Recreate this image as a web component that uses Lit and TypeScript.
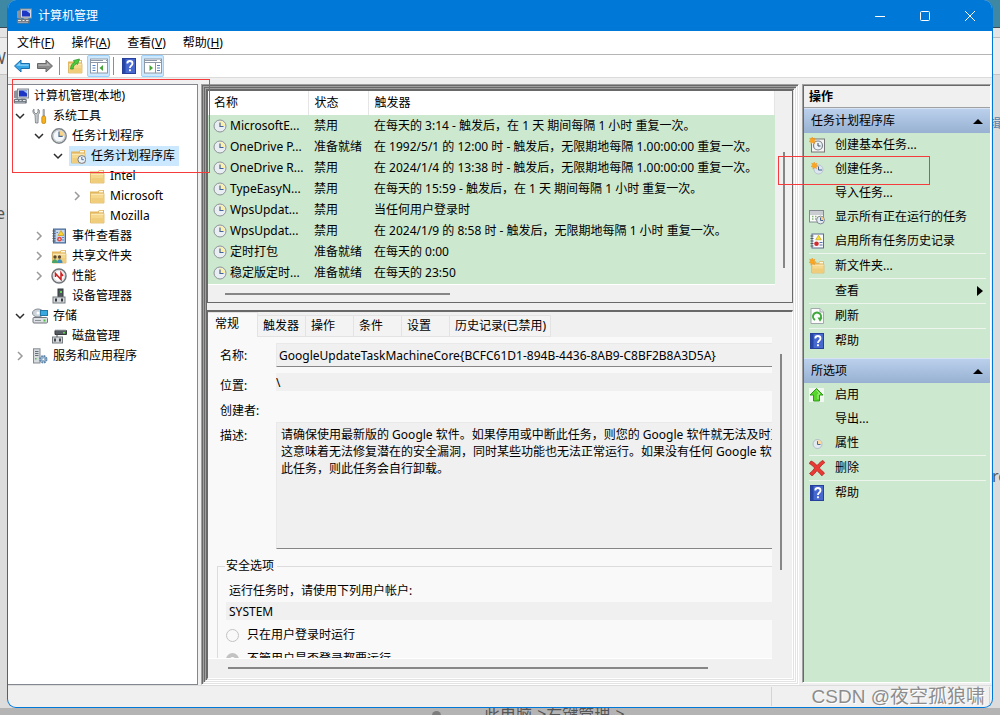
import { LitElement, html, svg, css, nothing } from "lit";
import { customElement, state } from "lit/decorators.js";
import { classMap } from "lit/directives/class-map.js";
import { styleMap } from "lit/directives/style-map.js";

const folderShape = svg`
  <path d="M1 3.500h8l1-1.500h5v12.500H1z" fill="#e3b75d"/>
  <rect x="10" y="2.800" width="4" height="1.600" fill="#fffbe8"/>
  <path d="M1.500 5.500h13.500v9.500h-13.500z" fill="#f6d88d" stroke="#dcb566" stroke-width=".8"/>
  <path d="M2.500 10h12v4.500h-12z" fill="#f0cd7a"/>
  <path d="M2 6.200h12.500" stroke="#fdeec2"/>`;

const star = svg`<path d="M4 0l1 2.500L7.500 1.500 6.500 4 9 5.200 6.300 6 7 8.500 4.500 7 2.500 9 2.300 6.200 0 5.500 2 4 .8 1.500 3.200 2.300z" fill="#ffa51c" stroke="#e98a10" stroke-width=".5"/>`;

const helpShape = svg`
  <rect x="1.500" y=".5" width="13" height="15" fill="#4668cf" stroke="#27419a"/>
  <rect x="2" y="1" width="2.500" height="14" fill="#2447a8"/>
  <path d="M6.300 5.400c0-3.200 5.200-3.200 5.200 0 0 2.200-2.600 2.200-2.600 4.600" fill="none" stroke="#fff" stroke-width="1.800"/>
  <rect x="8" y="11.300" width="1.900" height="1.900" fill="#fff"/>`;

const paneShape = svg`
  <rect x=".5" y="2" width="17" height="14" fill="#fff" stroke="#8d99a6"/>
  <path d="M1 3.500h16M1 5.500h16" stroke="#8d99a6"/>
  <path d="M13 3.500h3" stroke="#fff"/>`;

const ICONS: Record<string, unknown> = {
  computer: svg`
    <path d="M1 3l4-1v9l-4-1z" fill="#8b939c"/>
    <rect x="4.500" y="1" width="11" height="9" fill="#d6dade" stroke="#858c94"/>
    <rect x="6" y="2.500" width="8" height="6" fill="#1e36c4"/>
    <path d="M10 2.500h4v3z" fill="#9fc3f5"/>
    <path d="M8 10h4l1 2H7z" fill="#9da5ad"/>
    <rect x=".8" y="11" width="13" height="4.500" rx="1" fill="#6d757d"/>
    <path d="M2 12.500h3M6.500 12.500h2M10 12.500h2.500" stroke="#e4e8ec"/>
    <path d="M2 14.300h10" stroke="#a8b0b8"/>`,
  tools: svg`
    <path d="M2 1v3l2 2 2-2V1c2 1 2 4 .3 5.600L6 15H3.500L3 6.800C.5 5.200.3 2 2 1z" fill="#c5c9cd" stroke="#777d83" stroke-width=".8"/>
    <path d="M11 1.500h1.400V8H11z" fill="#b9bec3" stroke="#83888d" stroke-width=".6"/>
    <rect x="9.800" y="8" width="3.800" height="7.500" rx="1.500" fill="#f6b21b" stroke="#b87a0c" stroke-width=".7"/>`,
  clock: svg`
    <circle cx="8" cy="8" r="7.200" fill="#e6ebf0" stroke="#7d8287" stroke-width="1.400"/>
    <circle cx="8" cy="8" r="5.700" fill="#f5f8fa" stroke="#b8bdc2" stroke-width=".7"/>
    <path d="M8 8V2.500A5.500 5.500 0 0 1 13.500 8z" fill="#f7d58b"/>
    <path d="M8 3.500V8.300h3.700" fill="none" stroke="#4b6a93" stroke-width="1.200"/>`,
  task: svg`
    <circle cx="8" cy="8" r="6" fill="#e9eef2" stroke="#8d9297"/>
    <path d="M8 8V3A5 5 0 0 1 13 8z" fill="#fbf0a5"/>
    <path d="M8 4.500V8.500h3.500" fill="none" stroke="#47639b" stroke-width="1.200"/>`,
  folder: folderShape,
  taskFolder: svg`${folderShape}
    <circle cx="11.800" cy="11.500" r="3.900" fill="#edf2f6" stroke="#777d84"/>
    <path d="M11.800 9v2.700h2" fill="none" stroke="#456da5"/>`,
  events: svg`
    <rect x="2.500" y="1" width="12" height="14" fill="#7b9cc8" stroke="#4a6894"/>
    <rect x="4.500" y="2" width="9" height="12" fill="#c9d8ec"/>
    <path d="M1.500 3h3M1.500 5.500h3M1.500 8h3M1.500 10.500h3M1.500 13h3" stroke="#555c66"/>
    <path d="M10 2.500l3 5H7z" fill="#ffd42a" stroke="#b8900d" stroke-width=".6"/>
    <path d="M5.500 4.500h1.500M11 9.500h2M11 12h2" stroke="#5d85be"/>
    <circle cx="8.500" cy="11.200" r="2.400" fill="#e04a45"/><circle cx="8.500" cy="11.200" r=".9" fill="#fbd5d3"/>`,
  shared: svg`${folderShape}
    <circle cx="4" cy="9" r="1.700" fill="#5b4a32"/><circle cx="8.500" cy="9" r="1.700" fill="#5b4a32"/>
    <path d="M1 15c0-5 5.500-5 5.500 0z" fill="#48a568"/><path d="M6 15c0-5 5.500-5 5.500 0z" fill="#3b8ec2"/>`,
  perf: svg`
    <circle cx="8" cy="8" r="7" fill="#fff" stroke="#70757a" stroke-width="1.500"/>
    <circle cx="8" cy="8" r="5.500" fill="#fff" stroke="#c2c6ca" stroke-width=".7"/>
    <path d="M4.500 9V5.500l5.500 6V5l2 3" fill="none" stroke="#cc1f1f" stroke-width="1.500"/>`,
  device: svg`
    <rect x="7" y="1" width="5" height="8" fill="#50565c" stroke="#33383c"/>
    <rect x="9" y="3" width="2" height="2" fill="#5fd153"/>
    <rect x="2" y="9" width="12" height="6" fill="#d4d8dc" stroke="#767c82"/>
    <path d="M5 10.500v3M11 10.500v3" stroke="#35393d" stroke-width="2"/>`,
  storage: svg`
    <ellipse cx="6" cy="5" rx="5.500" ry="4" fill="#ccd3da" stroke="#868d94"/>
    <circle cx="6" cy="5" r="1.500" fill="#fff"/>
    <rect x="8.500" y="2.500" width="7" height="5" fill="#38a8e0" stroke="#2378a8"/>
    <rect x="1" y="9.500" width="14.500" height="5.500" rx="1" fill="#dce0e4" stroke="#70767c"/>
    <path d="M3 12.500h6" stroke="#8c9298"/><rect x="11.500" y="11.500" width="2" height="2" fill="#48c03c"/>`,
  disk: svg`
    <path d="M4 2.500h11.500v4H4z" fill="#555b61" stroke="#35393d"/>
    <path d="M4 2h11" stroke="#b9bfc5"/><rect x="12" y="4" width="2" height="1.500" fill="#5fd153"/>
    <rect x="1.500" y="9" width="10" height="6" fill="#d4d8dc" stroke="#767c82"/>
    <path d="M6 6.500v2.500" stroke="#555"/><path d="M4 10.500v3M9 10.500v3" stroke="#35393d" stroke-width="1.800"/>`,
  services: svg`
    <rect x="1.500" y=".8" width="6.500" height="14.200" fill="#d5dade" stroke="#858b91"/>
    <path d="M3 3.500h3.500M3 5.500h3.500M3 7.500h3.500" stroke="#6b7178"/><rect x="3" y="10" width="1.500" height="1.500" fill="#54bf46"/>
    <circle cx="11.300" cy="11.300" r="3.200" fill="#a9c3dc" stroke="#5f86ab" stroke-width="2" stroke-dasharray="1.700 .8"/>
    <circle cx="11.300" cy="11.300" r="1.300" fill="#fff" stroke="#5f86ab" stroke-width=".6"/>`,
  back: svg`<path d="M.5 8L7 2v3.500h8.500v5H7V14z" fill="#36a5e6" stroke="#1c6dac"/><path d="M2.500 7.700L6 4.400v2.100h8.500v1.300" fill="#8fd2f8"/>`,
  forward: svg`<path d="M15.500 8L9 2v3.500H.5v5H9V14z" fill="#8b8b8b" stroke="#686868"/><path d="M13.500 7.700L10 4.400v2.100H1.500v1.300" fill="#b9b9b9"/>`,
  up: svg`${folderShape}<path d="M3.500 11c.3-4 2-6 4-6.500L6.500 2.500 12.500 1 10.500 6.500 9.300 5.800C7 7 6 8.500 6.300 11z" fill="#4ccc3c" stroke="#249021" stroke-width=".7"/>`,
  help: helpShape,
  wizard: svg`
    <rect x="2.500" y="2" width="13" height="13" fill="#f4f4f2" stroke="#777"/>
    <circle cx="9" cy="8.500" r="4.500" fill="#edf2f7" stroke="#7d858c" stroke-width="1.200"/>
    <path d="M9 6v3h2.500" fill="none" stroke="#3f4d63"/>
    <g transform="scale(.8)">${star}</g>`,
  newTask: svg`
    <circle cx="9.500" cy="8.500" r="4.500" fill="#dce6f0" stroke="#b9c3cd"/>
    <path d="M9.500 5.500V9H13" fill="none" stroke="#44608c"/>
    <g transform="translate(2 1) scale(.8)">${star}</g>`,
  running: svg`
    <rect x=".5" y="1.500" width="14" height="11.500" fill="#fbfbfb" stroke="#848a90"/>
    <path d="M1 3h13M1 5h13" stroke="#98a0a8"/><path d="M3 7.500h1.500M6 7.500h1.500M3 10h1.500M6 10h1.500" stroke="#84b374" stroke-width="1.300"/>
    <circle cx="11.500" cy="11" r="3.900" fill="#e5ecf2" stroke="#7f878f"/>
    <path d="M11.500 11V7.500a3.500 3.500 0 0 1 3.500 3.500z" fill="#f7c985"/><path d="M11.500 8.500v3H14" fill="none" stroke="#47658f"/>`,
  history: svg`
    <rect x="3" y="1" width="11.500" height="14" fill="#f7f9fc" stroke="#5c6d8c"/>
    <path d="M1.500 3h3M1.500 5.500h3M1.500 8h3M1.500 10.500h3M1.500 13h3" stroke="#555c66"/>
    <path d="M9.500 2.300l2.800 4.500H6.700z" fill="#ffe02e" stroke="#b39a10" stroke-width=".6"/>
    <path d="M10.500 9.500h3M10.500 12h3" stroke="#5475ad"/>
    <circle cx="7.500" cy="10.700" r="2.300" fill="#d12c2c"/>`,
  newFolder: svg`<g transform="translate(1.500 1.500) scale(.9)">${folderShape}</g><g transform="scale(.8)">${star}</g>`,
  refresh: svg`
    <path d="M2 .5h9l3.500 3.500v11.500H2z" fill="#fcfcfc" stroke="#a3a8ad"/><path d="M11 .5V4h3.500" fill="#e4e6e8" stroke="#a3a8ad"/>
    <path d="M6 12A4 4 0 1 1 11.500 10.500" fill="none" stroke="#3ea83a" stroke-width="2"/>
    <path d="M8.500 9.500l5 .2-2.500 4z" fill="#3ea83a"/>`,
  enable: svg`<rect x="0" y="1" width="15" height="14" fill="#f2f6f0"/><path d="M7.500 1.500L14 8h-3.500v6h-6V8H1z" fill="#57d52b" stroke="#2c991d"/><path d="M7.500 3.300L11 7H9v5" fill="none" stroke="#a7f084"/>`,
  props: svg`
    <circle cx="8.500" cy="9" r="4.500" fill="#e2eaf1" stroke="#b3bcc5"/>
    <path d="M8.500 9V5a4 4 0 0 1 4 4z" fill="#fbd9a0"/><path d="M8.500 6.200V9.500h3" fill="none" stroke="#4c668d"/>`,
  remove: svg`<path d="M2 1C4 1.500 6 3.500 8 5.500c2-2.200 4-4.300 6-5l1.800 2.200C13.500 4 11.800 6 10.300 8c2 2 3.500 3.500 5.200 5L13 15.800c-1.800-1.700-3.300-3.300-5-5.200-1.500 2-3 4-5 5.200L.5 13.500C2.700 12 4.200 10 5.700 8 4.200 6.300 2.200 4.500.2 3.500z" fill="#ea3a33" stroke="#a91613" stroke-width=".7"/>`,
};

const icon = (name?: string) =>
  html`<svg class="icon" viewBox="0 0 16 16" aria-hidden="true">${name ? ICONS[name] : nothing}</svg>`;

interface Node {
  level: number;
  icon: string;
  label: string;
  open?: boolean;
}

const TREE: Node[] = [
  { level: 0, icon: "computer", label: "计算机管理(本地)" },
  { level: 1, icon: "tools", label: "系统工具", open: true },
  { level: 2, icon: "clock", label: "任务计划程序", open: true },
  { level: 3, icon: "taskFolder", label: "任务计划程序库", open: true },
  { level: 4, icon: "folder", label: "Intel" },
  { level: 4, icon: "folder", label: "Microsoft", open: false },
  { level: 4, icon: "folder", label: "Mozilla" },
  { level: 2, icon: "events", label: "事件查看器", open: false },
  { level: 2, icon: "shared", label: "共享文件夹", open: false },
  { level: 2, icon: "perf", label: "性能", open: false },
  { level: 2, icon: "device", label: "设备管理器" },
  { level: 1, icon: "storage", label: "存储", open: true },
  { level: 2, icon: "disk", label: "磁盘管理" },
  { level: 1, icon: "services", label: "服务和应用程序", open: false },
];

const TASKS = [
  ["MicrosoftE...", "禁用", "在每天的 3:14 - 触发后，在 1 天 期间每隔 1 小时 重复一次。"],
  ["OneDrive P...", "准备就绪", "在 1992/5/1 的 12:00 时 - 触发后，无限期地每隔 1.00:00:00 重复一次。"],
  ["OneDrive R...", "禁用", "在 2024/1/4 的 13:38 时 - 触发后，无限期地每隔 1.00:00:00 重复一次。"],
  ["TypeEasyN...", "禁用", "在每天的 15:59 - 触发后，在 1 天 期间每隔 1 小时 重复一次。"],
  ["WpsUpdat...", "禁用", "当任何用户登录时"],
  ["WpsUpdat...", "禁用", "在 2024/1/9 的 8:58 时 - 触发后，无限期地每隔 1 小时 重复一次。"],
  ["定时打包", "准备就绪", "在每天的 0:00"],
  ["稳定版定时...", "准备就绪", "在每天的 23:50"],
];

const TABS = ["常规", "触发器", "操作", "条件", "设置", "历史记录(已禁用)"];

interface Action {
  icon?: string;
  label: string;
  sep?: boolean;
  more?: boolean;
}

const SECTIONS: { title: string; items: Action[] }[] = [
  {
    title: "任务计划程序库",
    items: [
      { icon: "wizard", label: "创建基本任务..." },
      { icon: "newTask", label: "创建任务..." },
      { label: "导入任务..." },
      { icon: "running", label: "显示所有正在运行的任务" },
      { icon: "history", label: "启用所有任务历史记录" },
      { icon: "newFolder", label: "新文件夹...", sep: true },
      { label: "查看", sep: true, more: true },
      { icon: "refresh", label: "刷新", sep: true },
      { icon: "help", label: "帮助", sep: true },
    ],
  },
  {
    title: "所选项",
    items: [
      { icon: "enable", label: "启用" },
      { label: "导出..." },
      { icon: "props", label: "属性" },
      { icon: "remove", label: "删除", sep: true },
      { icon: "help", label: "帮助", sep: true },
    ],
  },
];

const DESCRIPTION = `请确保使用最新版的 Google 软件。如果停用或中断此任务，则您的 Google 软件就无法及时更新，
这意味着无法修复潜在的安全漏洞，同时某些功能也无法正常运行。如果没有任何 Google 软件使用
此任务，则此任务会自行卸载。`;

@customElement("app-root")
export class AppRoot extends LitElement {
  @state() private tab = 0;
  @state() private selected = 3;

  static styles = css`
    :host {
      display: block;
      position: relative;
      box-sizing: border-box;
      height: 100vh;
      padding: 0 7px 7px;
      overflow: hidden;
      font: 12px/16px "Noto Sans", "Noto Sans CJK SC", sans-serif;
      color: #000;
      background:
        linear-gradient(#b4b4b4, #b4b4b4) bottom / 100% 7px no-repeat,
        linear-gradient(#3f88a4 0 27px, #3a4a52 27px 28px, #e4e4e4 28px 37px, #bdbdbd 37px 38px, #ececec 38px 74px, #c4c4c4 74px 75px, #dcdcdc 75px);
    }
    * { box-sizing: border-box; }
    button, input, textarea { font: inherit; color: inherit; margin: 0; }
    button { border: 0; padding: 0; background: none; text-align: left; white-space: nowrap; }
    ul { list-style: none; margin: 0; padding: 0; }
    .icon { width: 16px; height: 16px; flex: none; display: block; }

    .behind { position: absolute; color: #555; font-size: 16px; line-height: 16px; white-space: nowrap; }
    .behind-w { left: -9px; top: 50px; }
    .behind-e { left: -4px; top: 205px; }
    .behind-edit { left: 989px; top: 116px; color: #5580a8; font-size: 12px; }
    .behind-rc { left: 992px; top: 468px; }
    .behind-note { left: 484px; top: 706px; }
    .behind-dot { left: 432px; top: 711px; width: 9px; height: 9px; border-radius: 50%; background: #7d7d7d; }

    .window {
      position: relative;
      display: flex;
      flex-direction: column;
      height: 100%;
      border: 1px solid #0078d7;
      border-top: 0;
      border-radius: 9px;
      background: #f0f0f0;
      overflow: hidden;
    }
    .titlebar { display: flex; flex: none; align-items: center; height: 31px; padding-left: 8px; background: #0078d7; color: #fff; }
    .title { flex: 1; margin: 0 0 0 6px; font-size: 12px; font-weight: 400; }
    .caption { width: 45px; height: 31px; display: grid; place-items: center; }
    .caption svg { width: 12px; height: 12px; fill: none; stroke: #fff; }

    .menu { display: flex; flex: none; gap: 17px; height: 24px; padding-left: 9px; background: #fff; border-bottom: 1px solid #b5b5b5; }
    .menu button { height: 24px; }
    .toolbar { display: flex; flex: none; align-items: center; height: 23px; padding-left: 2px; background: #fff; border-bottom: 1px solid #dcdcdc; }
    .tool { display: grid; place-items: center; width: 23px; height: 22px; }
    .tool.on { margin-left: 1px; background: #cce8ff; border: 1px solid #99d1ff; border-radius: 2px; }
    .tool.on svg { width: 18px; height: 18px; }
    .rule { width: 1px; height: 18px; margin: 0 3px; background: #8d8d8d; }

    .body { display: flex; flex: 1; min-height: 0; padding-top: 6px; }
    .tree { flex: none; width: 190px; padding: 1px 4px; background: #fff; border: 1px solid #828790; border-left: 0; }
    .node { display: flex; align-items: center; height: 20px; white-space: nowrap; }
    .chev { flex: none; width: 19px; height: 20px; display: grid; place-items: center start; padding-left: 3px; }
    .chev svg { width: 10px; height: 10px; fill: none; stroke: #9a9a9a; stroke-width: 1.500; }
    .chev.open svg { stroke: #2b2b2b; transform: rotate(90deg); }
    .label { display: flex; align-items: center; gap: 5px; height: 20px; padding: 0 4px 0 1px; }
    .node.sel .label { background: #cce8ff; }

    .bevel { display: flex; flex-direction: column; flex: 1; min-width: 0; min-height: 0; padding: 1px; border: 1px solid; border-color: #a0a0a0 #fff #fff #a0a0a0; box-shadow: inset 1px 1px #696969, inset -1px -1px #e3e3e3; }
    .outer { margin: 0 3px; }
    .list { display: grid; flex: none; grid-template: 1fr 18px / 1fr 17px; height: 213px; border: 1px solid #696969; }
    .grid { overflow: hidden; background: #cce8cf; height: 194px; border-bottom: 1px solid #fff; }
    table { width: 100%; border-collapse: collapse; table-layout: fixed; }
    th { height: 24px; padding: 0 6px; font-weight: 400; text-align: left; background: #fff; border-right: 1px solid #e5e5e5; }
    td { height: 21px; padding: 0 0 0 6px; white-space: nowrap; overflow: hidden; }
    td:first-child { padding-left: 4px; }
    .c-name { width: 100px; }
    .c-state { width: 60px; }
    .cell { display: flex; align-items: center; gap: 2px; }
    .scroll-v { display: flex; justify-content: center; }
    .scroll-h { display: flex; align-items: center; }
    .thumb-v { width: 2px; background: #868686; }
    .thumb-h { height: 2px; background: #868686; }
    .list .thumb-v { height: 116px; margin-top: 61px; }
    .list .thumb-h { width: 225px; margin-left: 17px; }

    .details { display: flex; flex-direction: column; flex: 1; min-height: 0; margin-top: 7px; border: 1px solid; border-width: 2px 1px 1px; border-color: #696969 #fff #fff #696969; }
    .tabs { display: flex; flex: none; align-items: flex-end; height: 25px; padding-right: 2px; }
    .tab { height: 22px; padding: 0 4px 0 5px; min-width: 48px; background: #f3f3f3; border: 1px solid #e3e3e3; border-left: 0; }
    .tab.active { height: 25px; min-width: 50px; padding: 0 7px 3px; background: #f9f9f9; border-bottom: 0; }
    .page { display: grid; flex: 1; min-height: 0; grid-template: minmax(0, 1fr) 17px / minmax(0, 1fr) 18px; margin: 0 2px 2px 0; background: #f0f0f0; }
    .page .thumb-v { height: 216px; margin-top: 17px; }
    .page .thumb-h { width: 480px; margin-left: 20px; }
    .view { overflow: hidden; background: #f9f9f9; border-bottom: 1px solid #fff; }
    .form { width: 640px; padding: 6px 0 0 9px; }
    .field { display: grid; grid-template-columns: 56px 1fr; align-items: start; padding-left: 3px; }
    .field label { padding-top: 5px; }
    .box { width: 100%; height: 24px; padding: 0 2px; background: #f0f0f0; border: 1px solid #e9e9e9; border-bottom-color: #868686; border-radius: 0; outline: 0; }
    .flat { width: 100%; height: 18px; padding: 0; background: #f0f0f0; border: 0; outline: 0; display: block; }
    .place { margin-top: 6px; }
    .author { margin-top: 4px; }
    .author .flat { background: none; }
    .desc { margin-top: 3px; }
    .desc label { padding-top: 6px; }
    .area { width: 100%; height: 127px; padding: 3px 4px; line-height: 17px; white-space: pre; overflow: hidden; resize: none; display: block; }
    fieldset { margin: 9px 0 0; padding: 9px 8px 20px; border: 1px solid #dcdcdc; }
    legend { padding: 0 3px 0 1px; margin-left: -1px; }
    fieldset .flat { padding-left: 3px; }
    .hint { margin: 0 0 3px 3px; }
    .radio { display: flex; align-items: center; gap: 8px; height: 24px; }
    .options { padding-top: 3px; }
    .radio input { appearance: none; width: 13px; height: 13px; border: 1px solid #c3c3c3; border-radius: 50%; }
    .radio input:checked { background: #f9f9f9; border: 4px solid #c3c3c3; }

    .actions { flex: none; width: 189px; margin: 0 1px 2px 0; padding: 1px 0 0 1px; background: #cce8cf; border: 1px solid; border-color: #a0a0a0 #fff #fff #a0a0a0; box-shadow: inset 1px 1px #696969; }
    .actions h2 { height: 22px; margin: 0; padding: 3px 5px; font-size: 12px; line-height: 16px; background: #f0f0f0; border-bottom: 1px solid #a0a0a0; }
    .section { display: flex; align-items: center; justify-content: space-between; width: 100%; height: 25px; padding: 0 7px; background: linear-gradient(#bad0ec, #98b1d2); border-top: 1px solid #d5e3f4; }
    .section svg { width: 10px; height: 5px; }
    .action { display: flex; align-items: center; gap: 10px; width: 100%; height: 24px; padding: 0 7px 0 5px; }
    .action .more { width: 6px; height: 10px; margin-left: auto; }
    .items { padding-bottom: 5px; }
    .items .sep { margin: 0 4px 0 5px; height: 1px; background: #eef5ee; }

    .status { display: flex; flex: none; height: 22px; border-top: 1px solid #dcdcdc; }
    .status span { flex: 1; margin: 1px 0; border-right: 1px solid #d4d4d4; }
    .status span + span { flex: none; width: 218px; margin-right: 2px; }
    .mark { position: absolute; right: 15px; bottom: 6px; font: 19px/24px "Liberation Sans", "Noto Sans CJK SC", sans-serif; color: #8c8c8c; text-shadow: 1px 1px #fff; white-space: nowrap; }
    .note { position: absolute; border: 1px solid #f53b3b; pointer-events: none; }
    .note-tree { left: 12px; top: 79px; width: 198px; height: 94px; }
    .note-action { left: 778px; top: 156px; width: 152px; height: 29px; }
  `;

  private renderNode(n: Node, i: number) {
    return html`<li
      class=${classMap({ node: true, sel: i === this.selected })}
      role="treeitem"
      style=${styleMap({ paddingLeft: `${Math.max(0, n.level - 1) * 19}px` })}
    >
      ${n.level
        ? n.open === undefined
          ? html`<span class="chev"></span>`
          : html`<button class=${classMap({ chev: true, open: n.open })} aria-label=${n.label}>
              <svg viewBox="0 0 10 10"><path d="M3 1l4 4-4 4" /></svg>
            </button>`
        : nothing}
      <button class="label" @click=${() => (this.selected = i)}>${icon(n.icon)}${n.label}</button>
    </li>`;
  }

  private renderList() {
    return html`<div class="list">
      <div class="grid">
        <table>
          <thead>
            <tr><th class="c-name">名称</th><th class="c-state">状态</th><th>触发器</th></tr>
          </thead>
          <tbody>
            ${TASKS.map(
              ([name, st, trigger]) => html`<tr>
                <td><div class="cell">${icon("task")}${name}</div></td>
                <td>${st}</td>
                <td>${trigger}</td>
              </tr>`
            )}
          </tbody>
        </table>
      </div>
      <div class="scroll-v"><div class="thumb-v"></div></div>
      <div class="scroll-h"><div class="thumb-h"></div></div>
    </div>`;
  }

  private renderDetails() {
    return html`<div class="details">
      <div class="tabs" role="tablist">
        ${TABS.map(
          (t, i) => html`<button role="tab" class=${classMap({ tab: true, active: i === this.tab })} @click=${() => (this.tab = i)}>${t}</button>`
        )}
      </div>
      <div class="page">
        <div class="view">
          <form class="form">
            <div class="field">
              <label for="name">名称:</label>
              <input id="name" class="box" readonly value="GoogleUpdateTaskMachineCore{BCFC61D1-894B-4436-8AB9-C8BF2B8A3D5A}" />
            </div>
            <div class="field place">
              <label for="place">位置:</label>
              <input id="place" class="flat" readonly value="\\" />
            </div>
            <div class="field author">
              <label for="author">创建者:</label>
              <input id="author" class="flat" readonly value="" />
            </div>
            <div class="field desc">
              <label for="desc">描述:</label>
              <textarea id="desc" class="box area" readonly .value=${DESCRIPTION}></textarea>
            </div>
            <fieldset>
              <legend>安全选项</legend>
              <div class="hint"><label for="account">运行任务时，请使用下列用户帐户:</label></div>
              <input id="account" class="flat" readonly value="SYSTEM" />
              <div class="options">
                <label class="radio"><input type="radio" name="run" disabled />只在用户登录时运行</label>
                <label class="radio"><input type="radio" name="run" checked disabled />不管用户是否登录都要运行</label>
              </div>
            </fieldset>
          </form>
        </div>
        <div class="scroll-v"><div class="thumb-v"></div></div>
        <div class="scroll-h"><div class="thumb-h"></div></div>
      </div>
    </div>`;
  }

  private renderActions() {
    return html`<aside class="actions">
      <h2>操作</h2>
      ${SECTIONS.map(
        (s) => html`<button class="section">${s.title}<svg viewBox="0 0 10 5"><path d="M0 5l5-5 5 5z" /></svg></button>
          <div class="items">
            ${s.items.map(
              (a) => html`${a.sep ? html`<div class="sep"></div>` : nothing}
                <button class="action">
                  ${icon(a.icon)}${a.label}
                  ${a.more ? html`<svg class="more" viewBox="0 0 6 10"><path d="M0 0l6 5-6 5z" /></svg>` : nothing}
                </button>`
            )}
          </div>`
      )}
    </aside>`;
  }

  render() {
    return html`
      <span class="behind behind-w">W</span>
      <span class="behind behind-e">e</span>
      <span class="behind behind-edit">辑器</span>
      <span class="behind behind-rc">rc</span>
      <span class="behind behind-dot"></span>
      <span class="behind behind-note">此电脑-&gt;右键管理-&gt;</span>
      <main class="window">
        <header class="titlebar">
          ${icon("computer")}
          <h1 class="title">计算机管理</h1>
          <button class="caption" aria-label="最小化"><svg viewBox="0 0 12 12"><path d="M1 6.500h10" /></svg></button>
          <button class="caption" aria-label="最大化"><svg viewBox="0 0 12 12"><rect x="1.500" y="1.500" width="9" height="9" rx="1" /></svg></button>
          <button class="caption" aria-label="关闭"><svg viewBox="0 0 12 12"><path d="M1 1l10 10M11 1L1 11" /></svg></button>
        </header>
        <nav class="menu">
          <button>文件(<u>F</u>)</button><button>操作(<u>A</u>)</button><button>查看(<u>V</u>)</button><button>帮助(<u>H</u>)</button>
        </nav>
        <div class="toolbar">
          <button class="tool" aria-label="后退">${icon("back")}</button>
          <button class="tool" aria-label="前进">${icon("forward")}</button>
          <i class="rule"></i>
          <button class="tool" aria-label="上移">${icon("up")}</button>
          <button class="tool on" aria-label="控制台树">
            <svg viewBox="0 0 18 18">${paneShape}<path d="M7.500 6v10" stroke="#8d99a6" /><path d="M2.500 8.500h3M2.500 11h3M2.500 13.500h3" stroke="#4f83c8" /><path d="M13 8v6l-3.500-3z" fill="#43a536" /></svg>
          </button>
          <i class="rule"></i>
          <button class="tool" aria-label="帮助">${icon("help")}</button>
          <button class="tool on" aria-label="操作窗格">
            <svg viewBox="0 0 18 18">${paneShape}<path d="M11.500 6v10" stroke="#8d99a6" /><path d="M13 8.500h3M13 11h3M13 13.500h3" stroke="#4f83c8" /><path d="M5.500 8v6l3.500-3z" fill="#43a536" /></svg>
          </button>
        </div>
        <div class="body">
          <ul class="tree" role="tree">${TREE.map((n, i) => this.renderNode(n, i))}</ul>
          <div class="bevel outer"><div class="bevel"><div class="bevel">${this.renderList()}${this.renderDetails()}</div></div></div>
          ${this.renderActions()}
        </div>
        <footer class="status"><span></span><span></span></footer>
      </main>
      <div class="mark">CSDN @夜空孤狼啸</div>
      <div class="note note-tree"></div>
      <div class="note note-action"></div>
    `;
  }
}
